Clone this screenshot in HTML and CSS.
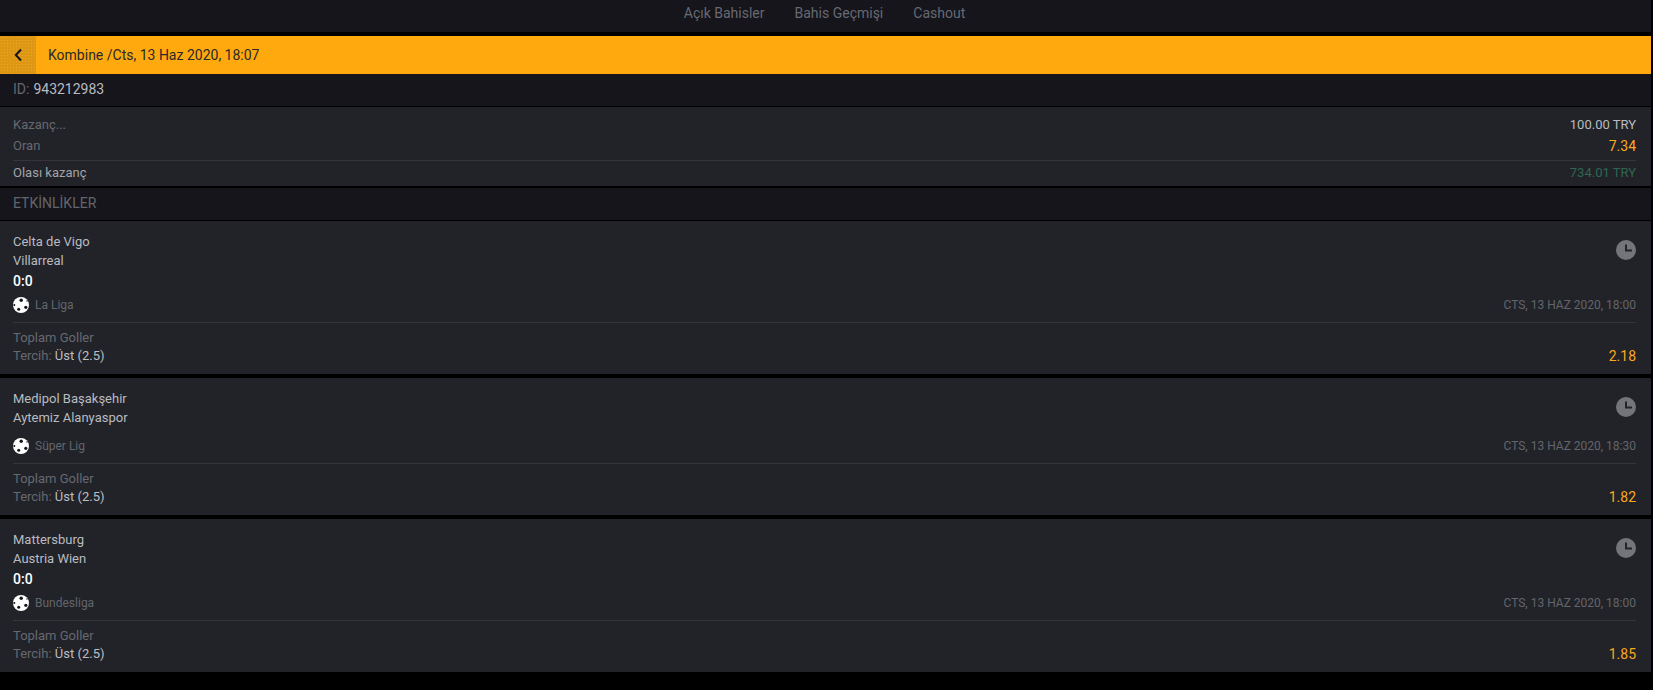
FILE: index.html
```html
<!DOCTYPE html>
<html lang="tr">
<head>
<meta charset="utf-8">
<title>Kombine</title>
<link rel="stylesheet" href="styles.css">
</head>
<body>
<nav class="tabs">
  <a class="tab">Açık Bahisler</a>
  <a class="tab">Bahis Geçmişi</a>
  <a class="tab">Cashout</a>
</nav>
<header class="title-bar">
  <div class="back">
    <svg width="10" height="14" viewBox="0 0 10 14"><path d="M8 1.500 2.800 7 8 12.500" fill="none" stroke="#14141a" stroke-width="2"/></svg>
  </div>
  <div class="title">Kombine /Cts, 13 Haz 2020, 18:07</div>
</header>
<div class="id-row"><span class="muted">ID:</span> 943212983</div>
<section class="summary">
  <div class="sum-row"><span class="muted">Kazanç...</span><span class="stake">100.00 TRY</span></div>
  <div class="sum-row"><span class="muted">Oran</span><span class="odd">7.34</span></div>
  <div class="sum-row possible"><span class="soft">Olası kazanç</span><span class="win">734.01 TRY</span></div>
</section>
<div class="heading">ETKİNLİKLER</div>

<article class="card">
  <div class="top">
    <div class="teams">
      <div class="team">Celta de Vigo</div>
      <div class="team">Villarreal</div>
      <div class="score">0:0</div>
    </div>
    <svg class="clock" viewBox="0 0 20 20"><circle cx="10" cy="10" r="10" fill="#74757a"/><path d="M10 4.500v6h6" fill="none" stroke="#23242a" stroke-width="2"/></svg>
  </div>
  <div class="league-row">
    <div class="league"><svg class="ball" viewBox="0 0 16 16"><circle cx="8" cy="8" r="8" fill="#fff"/><g fill="#14141a"><circle cx="8.200" cy="3.300" r="1.700"/><circle cx="1.300" cy="8" r="1"/><circle cx="12.800" cy="10.300" r="1.600"/><circle cx="5.700" cy="12.300" r="1.500"/><circle cx="14" cy="4" r=".7"/></g></svg>La Liga</div>
    <div class="date">CTS, 13 HAZ 2020, 18:00</div>
  </div>
  <div class="market">
    <div class="pick"><div class="muted">Toplam Goller</div><div><span class="muted">Tercih:</span> <span class="light">Üst (2.5)</span></div></div>
    <div class="odd">2.18</div>
  </div>
</article>

<article class="card">
  <div class="top">
    <div class="teams">
      <div class="team">Medipol Başakşehir</div>
      <div class="team">Aytemiz Alanyaspor</div>
    </div>
    <svg class="clock" viewBox="0 0 20 20"><circle cx="10" cy="10" r="10" fill="#74757a"/><path d="M10 4.500v6h6" fill="none" stroke="#23242a" stroke-width="2"/></svg>
  </div>
  <div class="league-row">
    <div class="league"><svg class="ball" viewBox="0 0 16 16"><circle cx="8" cy="8" r="8" fill="#fff"/><g fill="#14141a"><circle cx="8.200" cy="3.300" r="1.700"/><circle cx="1.300" cy="8" r="1"/><circle cx="12.800" cy="10.300" r="1.600"/><circle cx="5.700" cy="12.300" r="1.500"/><circle cx="14" cy="4" r=".7"/></g></svg>Süper Lig</div>
    <div class="date">CTS, 13 HAZ 2020, 18:30</div>
  </div>
  <div class="market">
    <div class="pick"><div class="muted">Toplam Goller</div><div><span class="muted">Tercih:</span> <span class="light">Üst (2.5)</span></div></div>
    <div class="odd">1.82</div>
  </div>
</article>

<article class="card">
  <div class="top">
    <div class="teams">
      <div class="team">Mattersburg</div>
      <div class="team">Austria Wien</div>
      <div class="score">0:0</div>
    </div>
    <svg class="clock" viewBox="0 0 20 20"><circle cx="10" cy="10" r="10" fill="#74757a"/><path d="M10 4.500v6h6" fill="none" stroke="#23242a" stroke-width="2"/></svg>
  </div>
  <div class="league-row">
    <div class="league"><svg class="ball" viewBox="0 0 16 16"><circle cx="8" cy="8" r="8" fill="#fff"/><g fill="#14141a"><circle cx="8.200" cy="3.300" r="1.700"/><circle cx="1.300" cy="8" r="1"/><circle cx="12.800" cy="10.300" r="1.600"/><circle cx="5.700" cy="12.300" r="1.500"/><circle cx="14" cy="4" r=".7"/></g></svg>Bundesliga</div>
    <div class="date">CTS, 13 HAZ 2020, 18:00</div>
  </div>
  <div class="market">
    <div class="pick"><div class="muted">Toplam Goller</div><div><span class="muted">Tercih:</span> <span class="light">Üst (2.5)</span></div></div>
    <div class="odd">1.85</div>
  </div>
</article>
</body>
</html>
```
FILE: styles.css
```css
* { box-sizing: border-box; }
html, body { margin: 0; height: 100%; overflow: hidden; }
body {
  background: #000;
  font-family: Roboto, "Liberation Sans", sans-serif;
  font-size: 13px;
  color: #b9bbc0;
  padding-right: 2px;
}
.muted { color: #666870; }
.light { color: #bcbec3; }
.soft { color: #a0a3aa; }
.tabs {
  height: 32px;
  margin-bottom: 4px;
  background: #15151b;
  display: flex;
  justify-content: center;
  align-items: center;
  gap: 30px;
  padding: 0 2px 6px 0;
  font-size: 14px;
  color: #676973;
}
.title-bar {
  height: 38px;
  background: #ffa90f;
  display: flex;
  align-items: center;
  color: #2a2a2c;
  font-size: 14px;
}
.back {
  width: 36px;
  height: 100%;
  background-color: #dd9712;
  background-image: radial-gradient(circle, #eaa52a 0.7px, transparent 0.9px);
  background-size: 3px 3px;
  display: flex;
  align-items: center;
  justify-content: center;
}
.title { padding-left: 12px; }
.id-row {
  height: 33px;
  background: #15151b;
  border-bottom: 1px solid #000;
  padding: 0 15px 2px 13px;
  display: flex;
  align-items: center;
  gap: 4px;
  font-size: 14px;
  color: #b9bbc0;
}
.summary {
  height: 79px;
  background: #222328;
  padding: 7px 15px 0 13px;
}
.sum-row {
  height: 21px;
  display: flex;
  justify-content: space-between;
  align-items: center;
}
.possible {
  margin-top: 4px;
  height: 26px;
  padding-bottom: 2px;
  border-top: 1px solid #34353a;
}
.stake { color: #b9bbc0; }
.odd { color: #fca81c; font-size: 14px; }
.win { color: #2f6650; }
.heading {
  height: 33px;
  margin-top: 2px;
  background: #15151b;
  border-bottom: 1px solid #000;
  padding: 0 15px 2px 13px;
  display: flex;
  align-items: center;
  color: #63656c;
  font-size: 14px;
}
.card {
  background: #222328;
  padding: 0 15px 0 13px;
  margin-bottom: 4px;
  overflow: hidden;
}
.top {
  display: flex;
  justify-content: space-between;
  padding-top: 11px;
}
.team { line-height: 19px; color: #b9bbc0; }
.score {
  height: 16px;
  line-height: 22px;
  color: #fff;
  font-weight: 500;
  font-size: 14px;
}
.clock { width: 20px; height: 20px; margin-top: 8px; }
.league-row {
  height: 37px;
  padding-top: 2px;
  border-bottom: 1px solid #34353a;
  display: flex;
  justify-content: space-between;
  align-items: center;
  font-size: 12px;
  color: #63656c;
}
.league { display: flex; align-items: center; gap: 6px; }
.ball { width: 16px; height: 16px; }
.date { font-size: 12px; }
.market {
  height: 51px;
  padding: 6px 0 9px;
  display: flex;
  justify-content: space-between;
  align-items: flex-end;
  line-height: 18px;
}
.market .odd { line-height: 18px; }
```
